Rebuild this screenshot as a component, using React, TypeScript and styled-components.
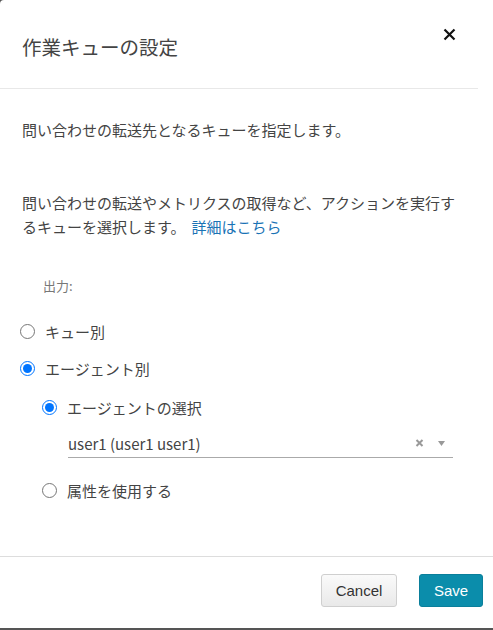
import React from "react";
import styled, { createGlobalStyle } from "styled-components";

const Global = createGlobalStyle`
  html, body { margin: 0; padding: 0; background: #555; }
  body { font-family: "Noto Sans CJK JP", "Noto Sans", sans-serif; }
`;

const Modal = styled.div`
  width: 493px;
  height: 628px;
  background: #fff;
  border-top-left-radius: 4px;
  display: flex;
  flex-direction: column;
  box-sizing: border-box;
`;

const Header = styled.div`
  height: 88px;
  margin-right: 15px;
  border-bottom: 1px solid #e8e8e8;
  display: flex;
  justify-content: space-between;
  align-items: flex-start;
  padding-left: 22px;
`;

const Title = styled.h1`
  margin: 33px 0 0 0;
  font-size: 19.5px;
  line-height: 27px;
  font-weight: 400;
  color: #444;
`;

const Close = styled.button`
  margin: 28px 22px 0 0;
  padding: 0;
  border: 0;
  background: none;
  width: 13px;
  height: 13px;
  display: flex;
  cursor: pointer;
`;

const Body = styled.div`
  flex: 1;
  padding: 0 22px;
`;

const Para = styled.p<{ $top: number }>`
  margin: ${(p) => p.$top}px 12px 0 0;
  font-size: 15px;
  line-height: 24px;
  color: #444;
`;

const Link = styled.a`
  color: #1a73b5;
  text-decoration: none;
  margin-left: 6px;
`;

const FieldLabel = styled.div`
  margin: 37px 0 0 21px;
  font-size: 13px;
  line-height: 20px;
  color: #777;
`;

const RadioRow = styled.label<{ $top: number; $indent?: number }>`
  display: flex;
  align-items: center;
  height: 24px;
  margin-top: ${(p) => p.$top}px;
  margin-left: ${(p) => (p.$indent ?? 0) - 2}px;
  font-size: 15px;
  color: #444;
  gap: 10px;
  cursor: pointer;
`;

const Radio = styled.input`
  margin: 0;
  width: 15px;
  height: 15px;
  flex-shrink: 0;
`;

const Select = styled.div`
  margin: 12px 18px 0 46px;
  height: 24px;
  padding-bottom: 2px;
  border-bottom: 1px solid #aaa;
  display: flex;
  align-items: center;
  font-size: 15px;
  color: #444;
`;

const SelectValue = styled.span`
  flex: 1;
`;

const SelectIcons = styled.span`
  display: flex;
  align-items: center;
  gap: 14px;
  margin-right: 8px;
`;

const Footer = styled.div`
  height: 72px;
  border-top: 1px solid #ddd;
  box-sizing: border-box;
  display: flex;
  justify-content: flex-end;
  align-items: flex-start;
  padding: 17px 10px 0 0;
  gap: 22px;
`;

const Button = styled.button<{ $primary?: boolean }>`
  height: 33px;
  box-sizing: border-box;
  border-radius: 3px;
  font-family: "Liberation Sans", Arial, sans-serif;
  font-size: 15px;
  padding: 0;
  cursor: pointer;
  width: ${(p) => (p.$primary ? "64px" : "76px")};
  color: ${(p) => (p.$primary ? "#fff" : "#333")};
  background: ${(p) =>
    p.$primary ? "#0b8dab" : "linear-gradient(#fafafa, #e9e9e9)"};
  border: 1px solid ${(p) => (p.$primary ? "#0a7f9b" : "#cfcfcf")};
`;

export default function App() {
  return (
    <>
      <Global />
      <Modal>
        <Header>
          <Title>作業キューの設定</Title>
          <Close aria-label="close">
            <svg width="13" height="13" viewBox="0 0 13 13">
              <path d="M1.5 1.5 L11.5 11.5 M11.5 1.5 L1.5 11.5" stroke="#111" strokeWidth="2.2" />
            </svg>
          </Close>
        </Header>
        <Body>
          <Para $top={29}>問い合わせの転送先となるキューを指定します。</Para>
          <Para $top={49}>
            問い合わせの転送やメトリクスの取得など、アクションを実行するキューを選択します。
            <Link href="#">詳細はこちら</Link>
          </Para>
          <FieldLabel>出力:</FieldLabel>
          <RadioRow $top={23}>
            <Radio type="radio" name="out" />
            キュー別
          </RadioRow>
          <RadioRow $top={13}>
            <Radio type="radio" name="out" defaultChecked />
            エージェント別
          </RadioRow>
          <RadioRow $top={15} $indent={22}>
            <Radio type="radio" name="agent" defaultChecked />
            エージェントの選択
          </RadioRow>
          <Select>
            <SelectValue>user1 (user1 user1)</SelectValue>
            <SelectIcons>
              <svg width="9" height="8" viewBox="0 0 9 8">
                <path d="M1.5 1 L7.5 7 M7.5 1 L1.5 7" stroke="#999" strokeWidth="2" />
              </svg>
              <svg width="7" height="5" viewBox="0 0 7 5">
                <path d="M0 0 H7 L3.5 5 Z" fill="#999" />
              </svg>
            </SelectIcons>
          </Select>
          <RadioRow $top={20} $indent={22}>
            <Radio type="radio" name="agent" />
            属性を使用する
          </RadioRow>
        </Body>
        <Footer>
          <Button>Cancel</Button>
          <Button $primary>Save</Button>
        </Footer>
      </Modal>
    </>
  );
}
